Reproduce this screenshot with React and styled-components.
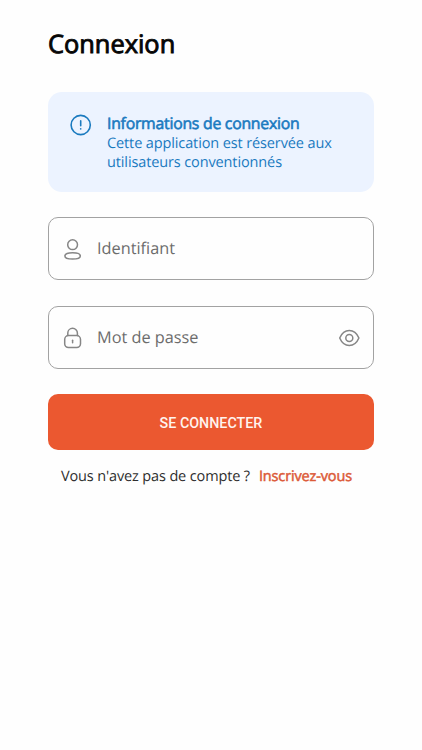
import React from 'react'
import styled, { createGlobalStyle } from 'styled-components'

const GlobalStyle = createGlobalStyle`
  * {
    box-sizing: border-box;
  }
  body {
    margin: 0;
    background: #fefefe;
    font-family: "Open Sans", "Noto Sans", sans-serif;
    text-rendering: geometricPrecision;
  }
`;

const Container = styled.main`
  display: flex;
  flex-direction: column;
  min-height: 750px;
  padding: 26px 48px 0;
`;

const Title = styled.h1`
  margin: 0 0 30px;
  font-size: 25.4px;
  line-height: 36px;
  font-weight: 400;
  color: #050505;
  -webkit-text-stroke: 0.9px currentColor;
`;

const InfoBox = styled.section`
  display: flex;
  gap: 16px;
  height: 100px;
  margin-bottom: 25px;
  padding: 21px 20px 0 21px;
  border-radius: 14px;
  background: #ecf3ff;
  color: #1a7abf;
`;

const InfoText = styled.div`
  display: flex;
  flex-direction: column;
  padding-top: 1px;
  white-space: nowrap;
`;

const InfoTitle = styled.span`
  font-size: 15.8px;
  line-height: 19px;
  margin-bottom: 1px;
  letter-spacing: -0.25px;
  -webkit-text-stroke: 0.6px currentColor;
`;

const InfoLine = styled.span`
  font-size: 14.5px;
  line-height: 19.4px;
  letter-spacing: -0.12px;
`;

const Field = styled.label`
  display: flex;
  align-items: center;
  height: 63px;
  margin-bottom: 26px;
  padding: 0 13px;
  border: 1px solid #a2a2a2;
  border-radius: 10px;
  color: #868686;
`;

const Input = styled.input`
  flex: 1;
  min-width: 0;
  margin: 0 0 2px 13px;
  padding: 0;
  border: none;
  outline: none;
  background: transparent;
  font-family: inherit;
  font-size: 16.3px;
  line-height: 24px;
  color: #222;
  text-rendering: inherit;

  &::placeholder {
    color: #6c6c6c;
    opacity: 1;
  }
`;

const Icon = styled.svg`
  flex: none;
  width: 22px;
  height: 22px;
  overflow: visible;
  fill: none;
  stroke: currentColor;
  stroke-width: ${({ $stroke }) => $stroke || 1.5};
  stroke-linecap: round;
  stroke-linejoin: round;
`;

const Button = styled.button`
  height: 56px;
  margin: -1px 0 12px;
  padding: 1px 0 0;
  border: none;
  border-radius: 10px;
  background: #eb5830;
  color: #fff3ee;
  font-family: Roboto, sans-serif;
  font-size: 14.3px;
  font-weight: 500;
  cursor: pointer;
`;

const Footer = styled.div`
  display: flex;
  gap: 9px;
  padding: 2px 0 0 13px;
  font-size: 14.5px;
  line-height: 26px;
  letter-spacing: -0.14px;
  color: #2e2e2e;
  white-space: nowrap;
`;

const SignupLink = styled.a`
  color: #dc5a38;
  -webkit-text-stroke: 0.5px currentColor;
  cursor: pointer;
`;

const AlertIcon = () => (
  <Icon viewBox="0 0 22 22" $stroke={1.6}>
    <circle cx="11.7" cy="12" r="9.6" />
    <path d="M11.7 7.9v4.8" />
    <path d="M11.7 15.8v.2" />
  </Icon>
)

const UserIcon = () => (
  <Icon viewBox="0 0 22 22">
    <circle cx="10.6" cy="6.7" r="4.9" />
    <path d="M2.9 17.9c0-2.3 3.2-3.1 7.7-3.1s7.7.8 7.7 3.1-3.2 3.1-7.7 3.1-7.7-.8-7.7-3.1z" />
  </Icon>
)

const LockIcon = () => (
  <Icon viewBox="0 0 22 22">
    <rect x="2.7" y="8.6" width="15.8" height="11.9" rx="3.8" />
    <path d="M5.8 8.4V6.1a4.8 4.8 0 0 1 9.6 0v2.3" />
    <path d="M10.6 13.2v2.5" />
  </Icon>
)

const EyeIcon = () => (
  <Icon viewBox="0 0 22 22">
    <path d="M1.7 11C3.7 6.3 7.3 3.5 11.3 3.5s7.6 2.8 9.6 7.5c-2 4.7-5.6 7.5-9.6 7.5S3.7 15.7 1.7 11z" />
    <circle cx="11.3" cy="11" r="3.5" />
  </Icon>
)

function App() {
  return (
    <>
      <GlobalStyle />
      <Container>
        <Title>Connexion</Title>
        <InfoBox>
          <AlertIcon />
          <InfoText>
            <InfoTitle>Informations de connexion</InfoTitle>
            <InfoLine>Cette application est réservée aux</InfoLine>
            <InfoLine>utilisateurs conventionnés</InfoLine>
          </InfoText>
        </InfoBox>
        <Field>
          <UserIcon />
          <Input placeholder="Identifiant" />
        </Field>
        <Field>
          <LockIcon />
          <Input type="password" placeholder="Mot de passe" />
          <EyeIcon />
        </Field>
        <Button>SE CONNECTER</Button>
        <Footer>
          <span>Vous n'avez pas de compte ?</span>
          <SignupLink>Inscrivez-vous</SignupLink>
        </Footer>
      </Container>
    </>
  )
}

export default App
